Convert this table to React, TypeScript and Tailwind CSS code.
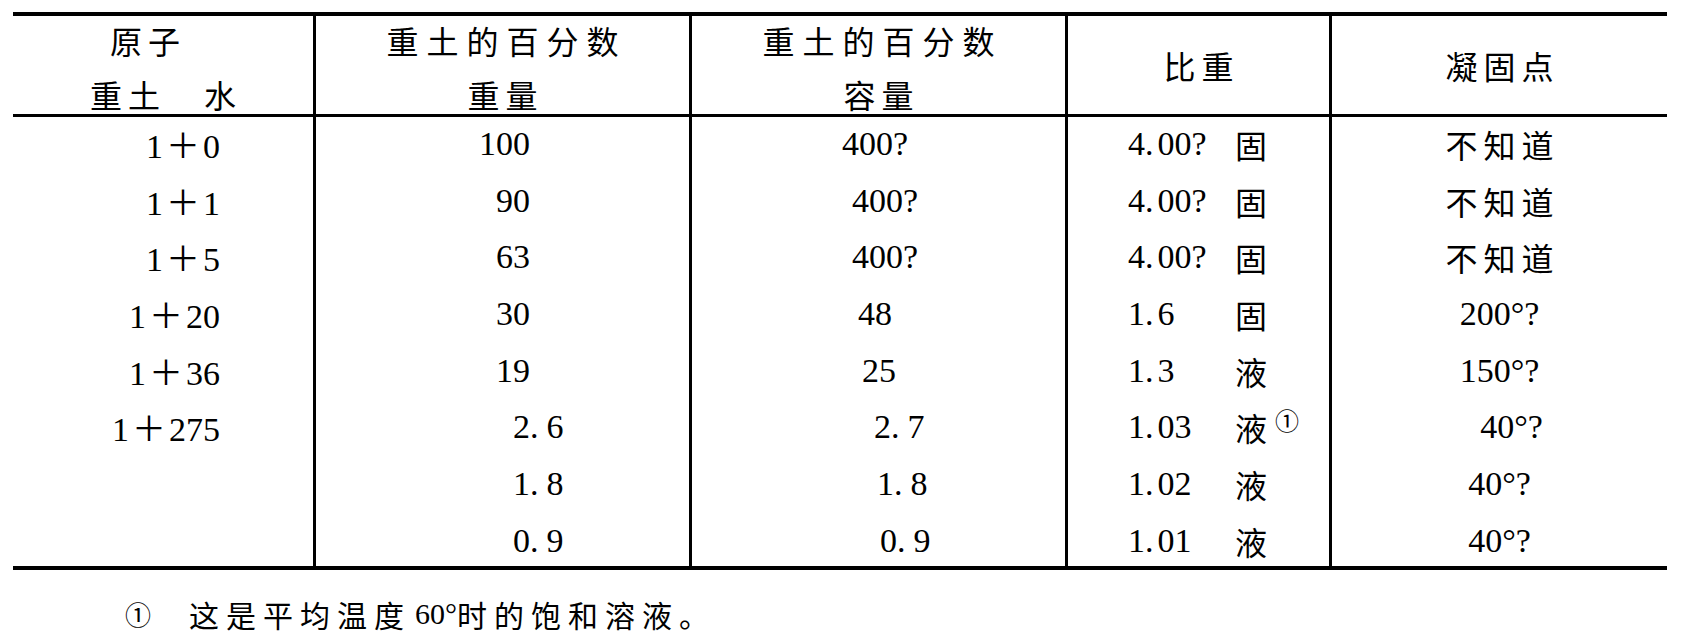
type Row = {
  atom: string
  wInt: string
  wFrac?: string
  vol: string
  volPad: string
  sg: string
  state: string
  note?: boolean
  fp: string
  fpCjk?: boolean
  fpPad?: string
}

const rows: Row[] = [
  { atom: '0', wInt: '100', vol: '400?', volPad: 'pl-[150px]', sg: '4.00?', state: '固', fp: '不知道', fpCjk: true },
  { atom: '1', wInt: '90', vol: '400?', volPad: 'pl-[160px]', sg: '4.00?', state: '固', fp: '不知道', fpCjk: true },
  { atom: '5', wInt: '63', vol: '400?', volPad: 'pl-[160px]', sg: '4.00?', state: '固', fp: '不知道', fpCjk: true },
  { atom: '20', wInt: '30', vol: '48', volPad: 'pl-[166px]', sg: '1.6', state: '固', fp: '200°?' },
  { atom: '36', wInt: '19', vol: '25', volPad: 'pl-[170px]', sg: '1.3', state: '液', fp: '150°?' },
  { atom: '275', wInt: '2', wFrac: '6', vol: '2.7', volPad: 'pl-[182px]', sg: '1.03', state: '液', note: true, fp: '40°?', fpPad: 'pl-[24px]' },
  { atom: '', wInt: '1', wFrac: '8', vol: '1.8', volPad: 'pl-[185px]', sg: '1.02', state: '液', fp: '40°?' },
  { atom: '', wInt: '0', wFrac: '9', vol: '0.9', volPad: 'pl-[188px]', sg: '1.01', state: '液', fp: '40°?' },
]

const cjk = "font-['Noto_Sans_CJK_SC',sans-serif]"
const head = `${cjk} text-[32px] leading-[54px] tracking-[6px] pl-[6px]`
const headWide = `${cjk} text-[32px] leading-[54px] tracking-[8px] pl-[8px]`

// number with the slightly loose decimal point of the printed table
function Num({ v, gap }: { v: string; gap: string }) {
  const [a, b] = v.split('.')
  if (b === undefined) return <>{v}</>
  return (
    <>
      {a}
      <span className={gap}>.</span>
      {b}
    </>
  )
}

export default function App() {
  return (
    <div className="min-h-screen bg-white text-black font-['Liberation_Serif','Noto_Sans_CJK_SC',serif]">
      <div className="ml-[13px] mt-[12px] w-[1654px] border-y-4 border-black">
        <div className="grid grid-cols-[300px_376px_376px_264px_338px]">
          {/* header */}
          <div className="flex h-[101px] flex-col items-center justify-center border-b-[3px] border-black pt-[3px]">
            <span className={`${head} pr-[36px]`}>原子</span>
            <span className={head}>重土　水</span>
          </div>
          <div className="flex h-[101px] flex-col items-center justify-center border-b-[3px] border-l-[3px] border-black pt-[3px]">
            <span className={headWide}>重土的百分数</span>
            <span className={head}>重量</span>
          </div>
          <div className="flex h-[101px] flex-col items-center justify-center border-b-[3px] border-l-[3px] border-black pt-[3px]">
            <span className={headWide}>重土的百分数</span>
            <span className={head}>容量</span>
          </div>
          <div className="flex h-[101px] items-center justify-center border-b-[3px] border-l-[3px] border-black">
            <span className={head}>比重</span>
          </div>
          <div className="flex h-[101px] items-center justify-center border-b-[3px] border-l-[3px] border-black">
            <span className={head}>凝固点</span>
          </div>

          {/* body */}
          {rows.map((r, i) => (
            <Cells key={i} r={r} h={i === rows.length - 1 ? 'h-[52px]' : 'h-[56.7px]'} />
          ))}
        </div>
      </div>

      <div className="mt-[24px] flex items-center pl-[125px] leading-[40px]">
        <span className={`${cjk} text-[26px]`}>①</span>
        <span className="ml-[38px] flex items-center">
          <span className={`${cjk} text-[30px] tracking-[7px]`}>这是平均温度</span>
          <span className="ml-[4px] text-[30px]">60°</span>
          <span className={`${cjk} text-[30px] tracking-[7px]`}>时的饱和溶液。</span>
        </span>
      </div>
    </div>
  )
}

function Cells({ r, h }: { r: Row; h: string }) {
  return (
    <>
      <div className={`${h} pr-[93px] text-right text-[34px] leading-[54px]`}>
        {r.atom && (
          <>
            1<span className={`${cjk} mx-[3px]`}>＋</span>
            {r.atom}
          </>
        )}
      </div>
      <div className={`${h} flex border-l-[3px] border-black text-[34px] leading-[54px]`}>
        <span className="inline-block w-[214px] text-right">{r.wInt}</span>
        {r.wFrac && (
          <span>
            <span className="mr-[8px]">.</span>
            {r.wFrac}
          </span>
        )}
      </div>
      <div className={`${h} ${r.volPad} border-l-[3px] border-black text-[34px] leading-[54px]`}>
        <Num v={r.vol} gap="mr-[8px]" />
      </div>
      <div className={`${h} flex border-l-[3px] border-black pl-[60px] text-[34px] leading-[54px]`}>
        <span className="inline-block w-[107px]">
          <Num v={r.sg} gap="mr-[4px]" />
        </span>
        <span className={`${cjk} text-[32px]`}>{r.state}</span>
        {r.note && <span className={`${cjk} ml-[8px] -translate-y-[7px] text-[24px]`}>①</span>}
      </div>
      <div className={`${h} ${r.fpPad ?? ''} flex justify-center border-l-[3px] border-black leading-[54px]`}>
        {r.fpCjk ? (
          <span className={`${cjk} pl-[6px] text-[32px] tracking-[6px]`}>{r.fp}</span>
        ) : (
          <span className="text-[34px]">{r.fp}</span>
        )}
      </div>
    </>
  )
}
